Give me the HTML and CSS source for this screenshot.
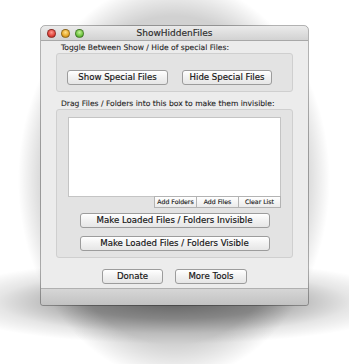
FILE: index.html
```html
<!DOCTYPE html>
<html>
<head>
  <title>ShowHiddenFiles</title>
  <link rel="stylesheet" href="styles.css">
</head>
<body>
  <div class="window">
    <div class="titlebar">
      <div class="lights">
        <span class="light red"></span>
        <span class="light yellow"></span>
        <span class="light green"></span>
      </div>
      <div class="title">ShowHiddenFiles</div>
      <div></div>
    </div>

    <div class="content">
      <div class="label label-top">Toggle Between Show / Hide of special Files:</div>
      <div class="group group-toggle">
        <button class="btn btn-show">Show Special Files</button>
        <button class="btn btn-hide">Hide Special Files</button>
      </div>

      <div class="label label-drag">Drag Files / Folders into this box to make them invisible:</div>
      <div class="group group-drag">
        <div class="drop-list"></div>
        <div class="list-tools">
          <button class="tool tool-folders">Add Folders</button>
          <button class="tool tool-files">Add Files</button>
          <button class="tool tool-clear">Clear List</button>
        </div>
        <button class="btn btn-wide btn-invisible">Make Loaded Files / Folders Invisible</button>
        <button class="btn btn-wide btn-visible">Make Loaded Files / Folders Visible</button>
      </div>

      <div class="footer">
        <button class="btn btn-donate">Donate</button>
        <button class="btn btn-more">More Tools</button>
      </div>
    </div>

    <div class="bottombar"></div>
  </div>
</body>
</html>
```

FILE: styles.css
```css
html {
  background: #ffffff;
}

/* the desktop behind the window carries the drop shadow */
body {
  margin: 0;
  width: 349px;
  height: 364px;
  box-sizing: border-box;
  padding: 26px 0 0 41px;
  font-family: "DejaVu Sans", "Liberation Sans", sans-serif;
  color: #222;
  background:
    radial-gradient(ellipse 235px 42px at 174px 302px, rgba(0, 0, 0, 0.52), rgba(0, 0, 0, 0.36) 40%, rgba(0, 0, 0, 0.1) 75%, rgba(0, 0, 0, 0) 100%),
    radial-gradient(ellipse 156px 200px at 174px 180px, rgba(0, 0, 0, 0.18) 82%, rgba(0, 0, 0, 0) 100%),
    #ffffff;
}

.window {
  width: 267px;
  height: 279px;
  display: flex;
  flex-direction: column;
  background: #ececec;
  border-radius: 4px 4px 2px 2px;
  outline: 1px solid rgba(0, 0, 0, 0.3);
}

.titlebar {
  height: 14px;
  display: grid;
  grid-template-columns: 1fr auto 1fr;
  align-items: center;
  background: linear-gradient(#ebebeb, #d2d2d2);
  border-bottom: 1px solid #a8a8a8;
  border-radius: 4px 4px 0 0;
  flex-shrink: 0;
}

.lights {
  display: flex;
  gap: 5px;
  padding-left: 6px;
}

.light {
  width: 9px;
  height: 9px;
  border-radius: 50%;
  box-sizing: border-box;
  border: 1px solid rgba(0, 0, 0, 0.35);
}

.red {
  background: radial-gradient(circle at 50% 35%, #ff9a90, #e0443b 60%, #a8201a);
}

.yellow {
  background: radial-gradient(circle at 50% 35%, #ffe08a, #e8a92a 60%, #a86f10);
}

.green {
  background: radial-gradient(circle at 50% 35%, #c6f29a, #70c542 60%, #3c8b1f);
}

.title {
  font-size: 9px;
  color: #2a2a2a;
  line-height: 14px;
  -webkit-text-stroke: 0.15px #2a2a2a;
}

.content {
  flex: 1;
  padding: 0 15px;
  display: flex;
  flex-direction: column;
}

.label {
  font-size: 7.6px;
  line-height: 11px;
  height: 11px;
  padding-left: 5px;
  white-space: nowrap;
  color: #1e1e1e;
  -webkit-text-stroke: 0.1px #1e1e1e;
}

.label-top {
  margin-top: 1px;
}

.label-drag {
  margin-top: 6px;
}

.group {
  box-sizing: border-box;
  background: #e3e3e3;
  border: 1px solid #cfcfcf;
  border-radius: 3px;
}

.group-toggle {
  height: 39px;
  display: flex;
  align-items: flex-start;
  padding: 16px 0 0 10px;
  gap: 14px;
}

.btn {
  box-sizing: border-box;
  font-family: "DejaVu Sans", "Liberation Sans", sans-serif;
  font-size: 8.6px;
  color: #111;
  -webkit-text-stroke: 0.15px #111;
  height: 15px;
  padding: 0;
  line-height: 13px;
  background: linear-gradient(#ffffff, #f1f1f1 50%, #e6e6e6);
  border: 1px solid #9c9c9c;
  border-radius: 3px;
  white-space: nowrap;
}

.btn-show {
  width: 101px;
}

.btn-hide {
  width: 90px;
}

.group-drag {
  height: 149px;
  display: flex;
  flex-direction: column;
  align-items: center;
  padding: 7px 11px 0 11px;
}

.drop-list {
  box-sizing: border-box;
  width: 213px;
  height: 80px;
  background: #ffffff;
  border: 1px solid #c4c4c4;
}

.list-tools {
  align-self: flex-end;
  display: flex;
  margin-top: -1px;
}

.tool {
  box-sizing: border-box;
  height: 12px;
  padding: 0;
  font-family: "DejaVu Sans", "Liberation Sans", sans-serif;
  font-size: 6.2px;
  color: #1a1a1a;
  -webkit-text-stroke: 0.15px #1a1a1a;
  line-height: 10px;
  background: linear-gradient(#ffffff, #ebebeb);
  border: 1px solid #b3b3b3;
  border-radius: 0;
  white-space: nowrap;
}

.tool + .tool {
  margin-left: -1px;
}

.tool-folders {
  width: 43px;
}

.tool-files {
  width: 43px;
}

.tool-clear {
  width: 43px;
}

.btn-wide {
  width: 190px;
}

.btn-invisible {
  margin-top: 5px;
}

.btn-visible {
  margin-top: 8px;
}

.footer {
  display: flex;
  justify-content: center;
  gap: 12px;
  margin-top: 11px;
}

.btn-donate {
  width: 61px;
}

.btn-more {
  width: 72px;
}

.bottombar {
  height: 16px;
  flex-shrink: 0;
  background: linear-gradient(#d6d6d6, #c2c2c2);
  border-top: 1px solid #b0b0b0;
  border-radius: 0 0 2px 2px;
}
```
